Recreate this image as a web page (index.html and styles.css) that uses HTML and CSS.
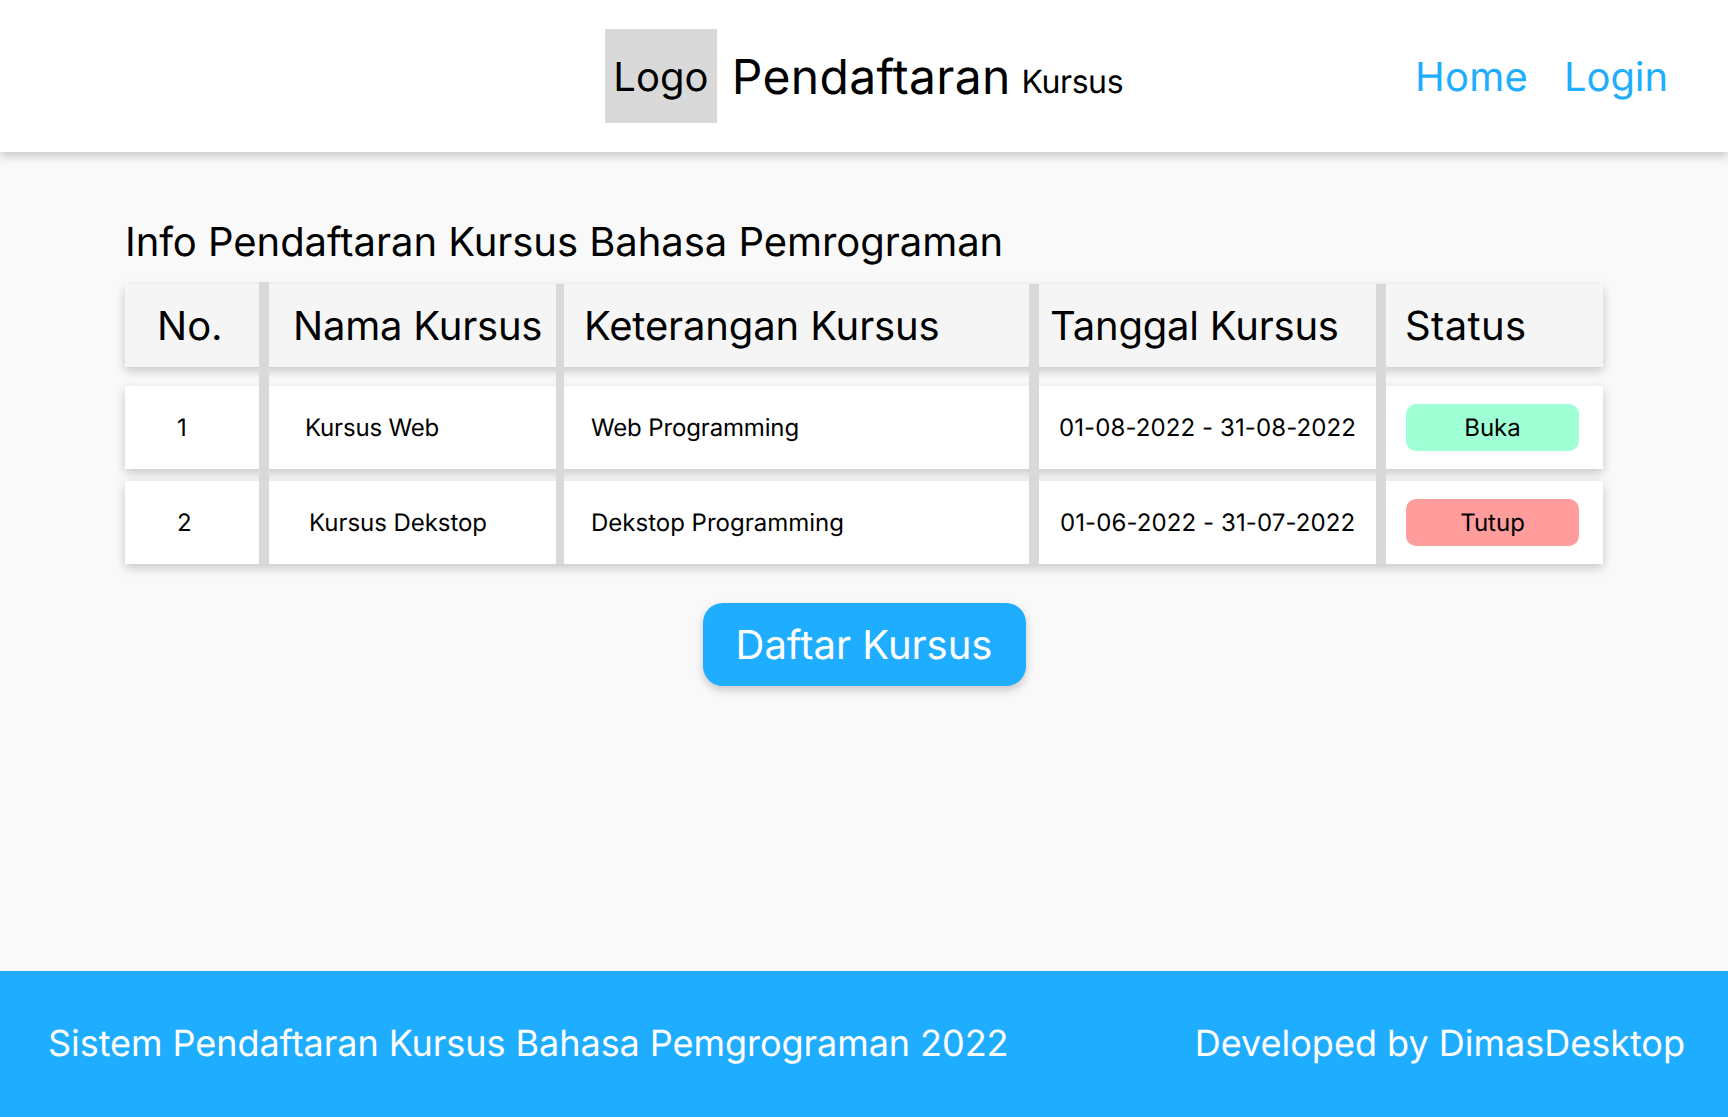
FILE: index.html
```html
<!DOCTYPE html>
<html lang="id">
<head>
    <meta charset="UTF-8">
    <title>Pendaftaran Kursus</title>
    <link rel="stylesheet" href="styles.css">
</head>
<body>
    <header class="topbar">
        <div></div>
        <div class="brand">
            <div class="logo">Logo</div>
            <h1 class="brand-title">Pendaftaran <small>Kursus</small></h1>
        </div>
        <nav class="nav">
            <a href="#">Home</a>
            <a class="nav-login" href="#">Login</a>
        </nav>
    </header>

    <main class="content">
        <h2 class="page-title">Info Pendaftaran Kursus Bahasa Pemrograman</h2>

        <div class="course-table">
            <div class="row row-head">
                <div class="cell cell-no">No.</div>
                <div class="cell cell-name">Nama Kursus</div>
                <div class="cell cell-desc">Keterangan Kursus</div>
                <div class="cell cell-date">Tanggal Kursus</div>
                <div class="cell cell-status">Status</div>
            </div>
            <div class="row row-1">
                <div class="cell cell-no">1</div>
                <div class="cell cell-name web">Kursus Web</div>
                <div class="cell cell-desc">Web Programming</div>
                <div class="cell cell-date">01-08-2022 - 31-08-2022</div>
                <div class="cell cell-status"><span class="badge badge-open">Buka</span></div>
            </div>
            <div class="row row-2">
                <div class="cell cell-no">2</div>
                <div class="cell cell-name desktop">Kursus Dekstop</div>
                <div class="cell cell-desc">Dekstop Programming</div>
                <div class="cell cell-date">01-06-2022 - 31-07-2022</div>
                <div class="cell cell-status"><span class="badge badge-closed">Tutup</span></div>
            </div>
            <div class="sep sep-1"></div>
            <div class="sep sep-2"></div>
            <div class="sep sep-3"></div>
            <div class="sep sep-4"></div>
        </div>

        <div class="actions">
            <a class="btn" href="#">Daftar Kursus</a>
        </div>
    </main>

    <footer class="footer">
        <span class="footer-left">Sistem Pendaftaran Kursus Bahasa Pemgrograman 2022</span>
        <span>Developed by DimasDesktop</span>
    </footer>
</body>
</html>
```

FILE: styles.css
```css
* {
    box-sizing: border-box;
}
body {
    margin: 0;
    min-height: 1117px;
    display: flex;
    flex-direction: column;
    font-family: 'Inter', sans-serif;
    background-color: #f9f9f9;
    color: #000;
    text-rendering: geometricPrecision;
}
.topbar {
    height: 152px;
    display: grid;
    grid-template-columns: 1fr auto 1fr;
    align-items: center;
    background-color: #fff;
    box-shadow: 0 4px 10px rgba(0,0,0,.2);
    position: relative;
}
.brand {
    display: flex;
    align-items: center;
    gap: 15px;
}
.logo {
    width: 112px;
    height: 94px;
    display: flex;
    align-items: center;
    justify-content: center;
    background-color: #d9d9d9;
    font-size: 40px;
}
.brand-title {
    margin: 0;
    font-size: 48px;
    font-weight: 400;
    letter-spacing: .3px;
    white-space: nowrap;
}
.brand-title small {
    margin-left: -3px;
    font-size: 32px;
    letter-spacing: -.4px;
    vertical-align: 1px;
}
.nav {
    justify-self: end;
    display: flex;
    gap: 36px;
    padding-right: 60px;
}
.nav a {
    color: #1fadff;
    font-size: 40px;
    letter-spacing: .25px;
    text-decoration: none;
}
.nav .nav-login {
    letter-spacing: -.1px;
}
.content {
    flex: 1;
    padding: 66px 125px 0;
}
.page-title {
    margin: 0 0 18px;
    font-size: 40px;
    line-height: 48px;
    font-weight: 400;
    letter-spacing: -.05px;
}
.course-table {
    display: grid;
    grid-template-columns: 134px 10px 287px 8px 465px 10px 337px 10px 217px;
    grid-template-rows: 83px 19px 83px 12px 83px;
}
.row {
    grid-column: 1 / -1;
    display: grid;
    grid-template-columns: subgrid;
    align-items: center;
    background-color: #fff;
    box-shadow: 0 4px 10px rgba(0,0,0,.2);
    font-size: 24px;
}
.row-head {
    grid-row: 1;
    background-color: #f5f5f5;
    font-size: 40px;
}
.row-1 { grid-row: 3; }
.row-2 { grid-row: 5; }
.cell {
    white-space: nowrap;
}
.cell-no { grid-column: 1; padding-left: 52px; }
.cell-name { grid-column: 3; }
.cell-desc { grid-column: 5; padding-left: 27px; }
.cell-date { grid-column: 7; padding-left: 20px; letter-spacing: .1px; }
.cell-status { grid-column: 9; padding: 0 24px 0 20px; }
.web { padding-left: 36px; letter-spacing: -.2px; }
.desktop { padding-left: 40px; letter-spacing: -.05px; }
.row-1 .cell-desc { letter-spacing: -.15px; }
.row-2 .cell-date { padding-left: 21px; }
.row-head .cell-no { padding-left: 32px; }
.row-head .cell-name { padding-left: 24px; letter-spacing: -.2px; }
.row-head .cell-desc { padding-left: 20px; letter-spacing: -.13px; }
.row-head .cell-date { padding-left: 11px; letter-spacing: -.2px; }
.row-head .cell-status { padding-left: 19px; letter-spacing: .35px; }
.badge {
    display: flex;
    align-items: center;
    justify-content: center;
    height: 47px;
    border-radius: 10px;
    letter-spacing: 0;
}
.badge-open {
    background-color: #9fffd5;
}
.badge-closed {
    background-color: #ff9c9c;
}
.sep {
    grid-row: 1 / -1;
    background-color: #d9d9d9;
}
.sep-1 { grid-column: 2; margin-top: -2px; }
.sep-2 { grid-column: 4; }
.sep-3 { grid-column: 6; }
.sep-4 { grid-column: 8; }
.actions {
    display: flex;
    justify-content: center;
    margin-top: 39px;
}
.btn {
    width: 323px;
    height: 83px;
    display: flex;
    align-items: center;
    justify-content: center;
    background-color: #1fadff;
    color: #fff;
    font-size: 40px;
    border-radius: 20px;
    text-decoration: none;
    box-shadow: 0 4px 10px rgba(0,0,0,.2);
}
.footer {
    height: 146px;
    display: flex;
    align-items: center;
    justify-content: space-between;
    padding: 0 43px 2px 48px;
    background-color: #1fadff;
    color: #fff;
    font-size: 36px;
}
.footer-left {
    letter-spacing: -.05px;
}
```
